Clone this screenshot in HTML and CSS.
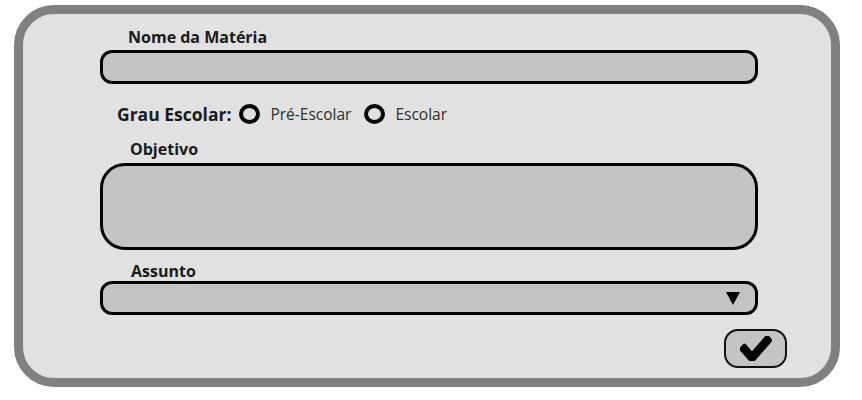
FILE: index.html
```html
<!DOCTYPE html>
<html lang="pt-BR">
<head>
    <meta charset="UTF-8">
    <meta name="viewport" content="width=device-width, initial-scale=1.0">
    <title>Cadastro de Matéria</title>
    <link rel="stylesheet" href="styles.css">
</head>
<body>

    <div class="card">
        <form class="subject-form">
            <label class="field-label label-name" for="nome">Nome da Matéria</label>
            <input class="text-input" type="text" id="nome" name="nome">

            <div class="grade-row">
                <span class="field-label grade-label">Grau Escolar:</span>
                <label class="radio">
                    <input type="radio" name="grau" value="pre">
                    <span>Pré-Escolar</span>
                </label>
                <label class="radio">
                    <input type="radio" name="grau" value="escolar">
                    <span>Escolar</span>
                </label>
            </div>

            <label class="field-label label-goal" for="objetivo">Objetivo</label>
            <textarea class="text-area" id="objetivo" name="objetivo"></textarea>

            <label class="field-label label-topic" for="assunto">Assunto</label>
            <div class="select-wrap">
                <select class="select-input" id="assunto" name="assunto">
                    <option value=""></option>
                </select>
                <span class="select-arrow"></span>
            </div>

            <div class="actions">
                <button type="submit" class="confirm-btn" aria-label="Confirmar">
                    <svg width="32" height="25" viewBox="143 381 1528 1045" preserveAspectRatio="none">
                        <path d="M1671 566q0 40-28 68l-724 724-136 136q-28 28-68 28t-68-28l-136-136-362-362q-28-28-28-68t28-68l136-136q28-28 68-28t68 28l294 295 656-657q28-28 68-28t68 28l136 136q28 28 28 68z" fill="#000"/>
                    </svg>
                </button>
            </div>
        </form>
    </div>

</body>
</html>
```

FILE: styles.css
```css
body {
    font-family: 'Open Sans', 'Liberation Sans', sans-serif;
    background-color: #fff;
    margin: 0;
    padding: 0;
}

.card {
    width: 826px;
    height: 382px;
    margin: 5px 0 0 14px;
    padding: 13px 73px 0 77px;
    box-sizing: border-box;
    background-color: #e1e1e1;
    border: 9px solid #808080;
    border-radius: 40px;
}

.subject-form {
    display: flex;
    flex-direction: column;
}

.field-label {
    font-size: 16px;
    font-weight: bold;
    line-height: 20px;
    color: #1a1a1a;
}

.label-name {
    padding-left: 28px;
}

.label-goal {
    margin-top: 15px;
    padding-left: 30px;
}

.label-topic {
    margin-top: 11px;
    padding-left: 31px;
}

.text-input, .text-area, .select-input {
    width: 100%;
    box-sizing: border-box;
    background-color: #c4c4c4;
    border: 3px solid #000;
    font-family: inherit;
    font-size: 14px;
    outline: none;
}

.text-input {
    height: 34px;
    margin-top: 3px;
    border-radius: 12px;
}

.grade-row {
    display: flex;
    align-items: center;
    height: 20px;
    margin-top: 20px;
    padding-left: 17px;
}

.grade-label {
    font-size: 17.5px;
}

.radio {
    display: flex;
    align-items: center;
    font-size: 15.5px;
    color: #2e2e2e;
    margin-left: 8px;
}

.radio + .radio {
    margin-left: 13px;
}

.radio input {
    appearance: none;
    width: 21px;
    height: 20px;
    margin: 0 10px 0 0;
    border: 4px solid #000;
    border-radius: 50%;
    box-sizing: border-box;
}

.text-area {
    height: 87px;
    margin-top: 4px;
    border-radius: 25px;
    resize: none;
}

.select-wrap {
    position: relative;
}

.select-input {
    appearance: none;
    height: 34px;
    border-radius: 12px;
}

.select-arrow {
    position: absolute;
    right: 18px;
    top: 11px;
    width: 0;
    height: 0;
    border-left: 7px solid transparent;
    border-right: 7px solid transparent;
    border-top: 13px solid #000;
}

.actions {
    display: flex;
    justify-content: flex-end;
    margin-top: 14px;
    margin-right: -29px;
}

.confirm-btn {
    width: 63px;
    height: 39px;
    display: flex;
    align-items: center;
    justify-content: center;
    padding: 0;
    background-color: #c4c4c4;
    border: 2px solid #111;
    border-radius: 14px;
    cursor: pointer;
}
```
